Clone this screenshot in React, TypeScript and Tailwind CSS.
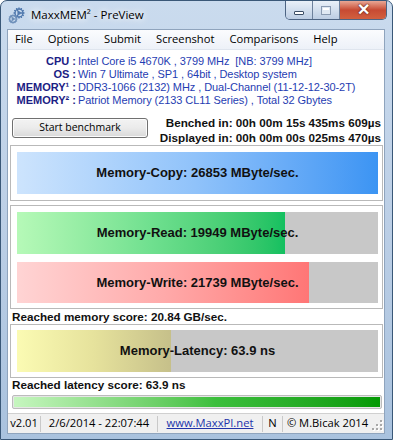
import React from 'react';
import { Cog } from 'lucide-react';

const seg = "font-['Open_Sans','Noto_Sans',sans-serif]";
const tah = "font-['Liberation_Sans',Arial,sans-serif]";

const menu = ['File', 'Options', 'Submit', 'Screenshot', 'Comparisons', 'Help'];

const info = [
  { label: 'CPU :', value: 'Intel Core i5 4670K , 3799 MHz  [NB: 3799 MHz]' },
  { label: 'OS :', value: 'Win 7 Ultimate , SP1 , 64bit , Desktop system' },
  { label: 'MEMORY¹ :', value: 'DDR3-1066 (2132) MHz , Dual-Channel (11-12-12-30-2T)' },
  { label: 'MEMORY² :', value: 'Patriot Memory (2133 CL11 Series) , Total 32 Gbytes' },
];

interface BarProps {
  label: string;
  fill: string;
  height?: string;
}

// gray track with a gradient fill and the value centered over both
const Bar: React.FC<BarProps> = ({ label, fill, height = 'h-[42px]' }) => (
  <div className={`relative ${height} bg-[#c8c8c8]`}>
    <div className={`h-full ${fill}`} />
    <div className={`absolute inset-0 flex items-center justify-center ${tah} text-[13px] font-bold text-[#111]`}>
      {label}
    </div>
  </div>
);

const Panel: React.FC<{ children: React.ReactNode; className?: string }> = ({ children, className = '' }) => (
  <div className={`ml-[2px] mr-[1px] border border-[#b9b9b9] bg-white pl-[6px] pr-[4px] ${className}`}>{children}</div>
);

const SizeGrip = () => (
  <svg width="11" height="11" viewBox="0 0 11 11">
    {[
      [8, 0], [8, 4], [4, 4], [8, 8], [4, 8], [0, 8],
    ].map(([x, y], i) => (
      <g key={i}>
        <rect x={x + 1} y={y + 1} width="2" height="2" fill="#fff" />
        <rect x={x} y={y} width="2" height="2" fill="#a8a8a8" />
      </g>
    ))}
  </svg>
);

export default function App() {
  return (
    <div className="h-[440px] w-[395px] overflow-hidden bg-white">
      <div className="h-[440px] w-[393px] rounded-t-[7px] border border-[#3a5878] bg-linear-to-b from-[#cadbee] via-[#bccfe6] to-[#a9c2de] pl-[6px] pr-[7px] pb-[5px]">
        {/* title bar */}
        <div className="-mx-[6px] -mr-[7px] flex h-[28px] items-start justify-between">
          <div className="flex h-[28px] items-center pl-[7px]">
            <div className="relative h-[17px] w-[17px]">
              <Cog size={12} strokeWidth={2.6} className="absolute left-[5px] top-0 text-[#4f78ad]" />
              <Cog size={10} strokeWidth={2.8} className="absolute left-0 top-[7px] text-[#6d8fb9]" />
            </div>
            <span className={`ml-[6px] ${seg} text-[11.5px] text-black [text-shadow:0_0_6px_#fff,0_0_10px_#fff]`}>
              MaxxMEM² - PreView
            </span>
          </div>
          <div className="mr-[5px] flex h-[19px] overflow-hidden rounded-b-[5px] border border-t-0 border-[#4d6483]">
            <div className="flex w-[27px] items-center justify-center border-r border-[#6d819c] bg-linear-to-b from-[#e9f0f8] via-[#d3dfee] to-[#bccde3]">
              <div className="mt-[5px] h-[4px] w-[10px] rounded-[1px] border border-[#3c4e66] bg-white" />
            </div>
            <div className="flex w-[27px] items-center justify-center border-r border-[#6d819c] bg-linear-to-b from-[#e9f0f8] via-[#d3dfee] to-[#bccde3]">
              <div className="h-[9px] w-[10px] border border-[#8a9bb2] bg-[#dfe8f3] p-[1px]">
                <div className="h-full w-full border-t-[2px] border-[#fff]" />
              </div>
            </div>
            <div className="flex w-[46px] items-center justify-center bg-linear-to-b from-[#e8a795] via-[#c74a33] to-[#d2603f]">
              <span className={`${tah} text-[16px] font-bold leading-none text-white [text-shadow:0_0_1px_#5a1a10,0_0_2px_#5a1a10]`}>
                ✕
              </span>
            </div>
          </div>
        </div>

        {/* client area */}
        <div className="flex h-[405px] flex-col border border-[#8fa4bd] bg-white">
          <div className={`flex h-[20px] shrink-0 items-center gap-[1px] border-b border-[#dfe5ee] bg-linear-to-b from-[#fbfcfe] to-[#edf1f8] ${seg} text-[11.2px] text-black`}>
            {menu.map((m) => (
              <span key={m} className="px-[7px]">
                {m}
              </span>
            ))}
          </div>

          <div className={`flex h-[60px] shrink-0 flex-col pt-[5px] ${tah} text-[11px]`}>
            {info.map((r) => (
              <div key={r.label} className="flex h-[13px] items-center leading-[13px]">
                <span className="w-[68px] text-right font-bold text-[#1b2184]">{r.label}</span>
                <span className="whitespace-pre pl-[2px] tracking-[-0.07px] text-[#1f3db2]">{r.value}</span>
              </div>
            ))}
          </div>

          <div className="flex h-[35px] shrink-0 items-start justify-between">
            <button
              className={`ml-[4px] mt-[8px] h-[20px] w-[136px] rounded-[3px] border border-[#707070] bg-linear-to-b from-[#f3f3f3] via-[#ebebeb] to-[#d9d9d9] ${seg} text-[10.5px] text-black shadow-[inset_0_0_0_1px_#fcfcfc]`}
            >
              Start benchmark
            </button>
            <div className={`pr-[3px] pt-[5px] text-right ${tah} text-[11.7px] font-bold leading-[15px] text-[#111]`}>
              <div>Benched in: 00h 00m 15s 435ms 609µs</div>
              <div>Displayed in: 00h 00m 00s 025ms 470µs</div>
            </div>
          </div>

          <Panel className="h-[56px] shrink-0 pt-[6px]">
            <Bar label="Memory-Copy: 26853 MByte/sec." fill="w-full bg-linear-to-r from-[#cde4fd] via-[#8fc2fa] to-[#3b94f3]" />
          </Panel>

          <Panel className="mt-[4px] flex h-[104px] shrink-0 flex-col gap-[8px] pt-[6px]">
            <Bar label="Memory-Read: 19949 MByte/sec." fill="w-[74.2%] bg-linear-to-r from-[#b6f9b8] via-[#6fe08f] to-[#12c060]" />
            <Bar
              label="Memory-Write: 21739 MByte/sec."
              height="h-[41px]"
              fill="w-[80.9%] bg-linear-to-r from-[#ffd4d4] via-[#ffaaaa] to-[#ff7676]"
            />
          </Panel>

          <div className={`flex h-[15px] shrink-0 items-center pl-[4px] ${tah} text-[11.7px] font-bold text-[#111]`}>
            Reached memory score: 20.84 GB/sec.
          </div>

          <Panel className="h-[54px] shrink-0 pt-[5px]">
            <Bar label="Memory-Latency: 63.9 ns" fill="w-[42.7%] bg-linear-to-r from-[#fbfbb3] via-[#e6e29c] to-[#c6c08a]" />
          </Panel>

          <div className={`flex h-[14px] shrink-0 items-center pl-[4px] ${tah} text-[11.7px] font-bold text-[#111]`}>
            Reached latency score: 63.9 ns
          </div>

          <div className="ml-[4px] mr-[2px] mt-[3px] h-[14px] shrink-0 rounded-[2px] border border-[#bcbcbc] bg-[#e6e6e6] p-[1px]">
            <div className="h-full w-full bg-linear-to-r from-[#c6f6bf] via-[#3cbf3c] via-55% to-[#039a03]" />
          </div>

          <div className={`mt-[4px] flex h-[20px] shrink-0 items-center border-t border-[#d0d0d0] bg-[#f0f0f0] ${seg} text-[11.2px] text-black`}>
            <div className="flex h-[16px] w-[33px] items-center justify-center border-r border-[#c9c9c9]">v2.01</div>
            <div className="flex h-[16px] w-[117px] items-center justify-center border-r border-[#c9c9c9]">2/6/2014 - 22:07:44</div>
            <div className="flex h-[16px] w-[105px] items-center justify-center border-r border-[#c9c9c9] text-[#2233aa] underline">
              www.MaxxPI.net
            </div>
            <div className="flex h-[16px] w-[20px] items-center justify-center border-r border-[#c9c9c9]">N</div>
            <div className="flex h-[16px] w-[89px] items-center justify-center">© M.Bicak 2014</div>
            <div className="flex h-full flex-1 items-end justify-end pb-[2px] pr-[1px]">
              <SizeGrip />
            </div>
          </div>
        </div>
      </div>
    </div>
  );
}
